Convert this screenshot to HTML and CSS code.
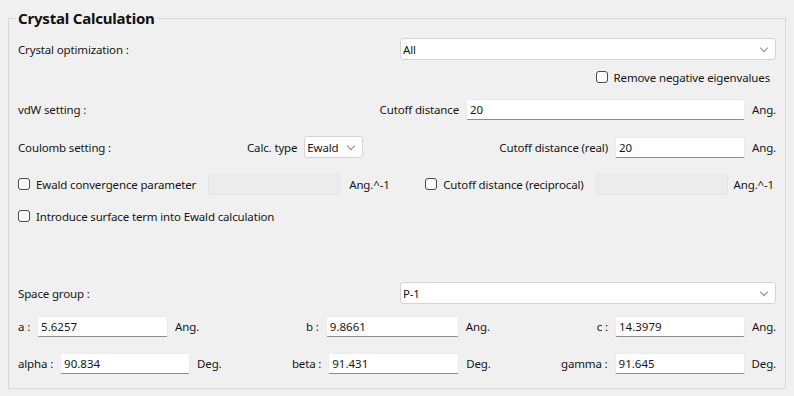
FILE: index.html
```html
<!DOCTYPE html>
<html>
<head>
    <meta charset="UTF-8">
    <title>Crystal Calculation</title>
    <link rel="stylesheet" href="styles.css">
</head>
<body>
<fieldset class="group">
    <legend>Crystal Calculation</legend>

    <div class="row r-opt">
        <span class="grow">Crystal optimization :</span>
        <div class="combo wide"><span>All</span><i class="chev"></i></div>
    </div>

    <div class="row r-neg">
        <span class="grow"></span>
        <label class="check"><input type="checkbox"><span>Remove negative eigenvalues</span></label>
    </div>

    <div class="row r-vdw">
        <span class="grow">vdW setting :</span>
        <span class="lbl">Cutoff distance</span>
        <input class="field w279" type="text" value="20">
        <span class="unit">Ang.</span>
    </div>

    <div class="row r-coul">
        <span>Coulomb setting :</span>
        <span class="grow"></span>
        <span class="lbl">Calc. type</span>
        <div class="combo small"><span>Ewald</span><i class="chev"></i></div>
        <span class="grow"></span>
        <span class="lbl">Cutoff distance (real)</span>
        <input class="field w130" type="text" value="20">
        <span class="unit">Ang.</span>
    </div>

    <div class="row r-ewald">
        <label class="check"><input type="checkbox"><span>Ewald convergence parameter</span></label>
        <input class="field off w132 gap12" type="text" disabled>
        <span class="unit u9">Ang.^-1</span>
        <span class="grow"></span>
        <label class="check"><input type="checkbox"><span>Cutoff distance (reciprocal)</span></label>
        <input class="field off w132 gap12" type="text" disabled>
        <span class="unit u6">Ang.^-1</span>
    </div>

    <div class="row r-surf">
        <label class="check"><input type="checkbox"><span>Introduce surface term into Ewald calculation</span></label>
    </div>

    <div class="row r-space">
        <span class="grow">Space group :</span>
        <div class="combo wide"><span>P-1</span><i class="chev"></i></div>
    </div>

    <div class="row r-abc">
        <span class="lbl">a :</span>
        <input class="field w131" type="text" value="5.6257">
        <span class="unit">Ang.</span>
        <span class="grow"></span>
        <span class="lbl">b :</span>
        <input class="field w133" type="text" value="9.8661">
        <span class="unit">Ang.</span>
        <span class="grow"></span>
        <span class="lbl">c :</span>
        <input class="field w130" type="text" value="14.3979">
        <span class="unit">Ang.</span>
    </div>

    <div class="row r-ang">
        <span class="lbl">alpha :</span>
        <input class="field w130" type="text" value="90.834">
        <span class="unit">Deg.</span>
        <span class="grow"></span>
        <span class="lbl">beta :</span>
        <input class="field w131" type="text" value="91.431">
        <span class="unit">Deg.</span>
        <span class="grow"></span>
        <span class="lbl">gamma :</span>
        <input class="field w130" type="text" value="91.645">
        <span class="unit">Deg.</span>
    </div>
</fieldset>
</body>
</html>
```

FILE: styles.css
```css
html,body{
    margin: 0;
    width: 100%;
    height: 100%;
}
body{
    background: #f0f0f0;
    font: 11.5px "Noto Sans", "Open Sans", sans-serif;
    letter-spacing: -0.15px;
    color: #161616;
}
.group{
    box-sizing: border-box;
    width: 778px;
    margin: 9px 0 0 8px;
    padding: 0 9px 14px 9px;
    border: 1px solid #d9d9d9;
    min-width: 0;
}
.group legend{
    font-size: 15px;
    font-weight: bold;
    letter-spacing: -0.2px;
    line-height: 18px;
    padding: 0 2px;
    margin-left: -2px;
    color: #111;
}
.row{
    display: flex;
    align-items: center;
    height: 22px;
    white-space: nowrap;
}
.r-opt{ margin-top: 11px; }
.r-neg{ margin-top: 6px; padding-right: 6px; }
.r-vdw{ margin-top: 10px; }
.r-coul{ margin-top: 16px; }
.r-ewald{ margin-top: 15px; padding-right: 2px; }
.r-surf{ margin-top: 10px; }
.r-space{ margin-top: 55px; }
.r-abc{ margin-top: 11px; }
.r-ang{ margin-top: 15px; }

.grow{
    flex: 1;
}
.lbl{
    margin-right: 7px;
}
.unit{
    margin-left: 7px;
}
.u9{ margin-left: 9px; }
.u6{ margin-left: 6px; }

/* combo box */
.combo{
    box-sizing: border-box;
    height: 22px;
    background: #fff;
    border: 1px solid #d4d4d4;
    border-radius: 3px;
    display: flex;
    align-items: center;
    padding: 0 8px 0 2px;
}
.combo span{
    flex: 1;
}
.combo.wide{
    width: 376px;
}
.combo.small{
    width: 59px;
}
.chev{
    width: 5px;
    height: 5px;
    border-right: 1px solid #8a8a8a;
    border-bottom: 1px solid #8a8a8a;
    transform: rotate(45deg);
    margin-top: -3px;
}

/* line edit */
.field{
    box-sizing: border-box;
    height: 21px;
    border: 1px solid #ececec;
    border-bottom: 1px solid #8d8d8d;
    border-radius: 2px;
    background: #fff;
    font: inherit;
    color: inherit;
    padding: 0 3px;
    outline: none;
}
.field.off{
    background: #ececec;
    border: 1px solid #e6e6e6;
}
.w279{ width: 279px; }
.w130{ width: 130px; }
.w131{ width: 131px; }
.w132{ width: 132px; }
.w133{ width: 133px; }
.gap12{ margin-left: 12px; }

/* check box */
.check{
    display: flex;
    align-items: center;
}
.check input{
    -webkit-appearance: none;
    appearance: none;
    box-sizing: border-box;
    width: 12px;
    height: 12px;
    margin: 0 6px 0 0;
    border: 1px solid #4a4a4a;
    border-radius: 3px;
    background: #fbfbfb;
}
```
